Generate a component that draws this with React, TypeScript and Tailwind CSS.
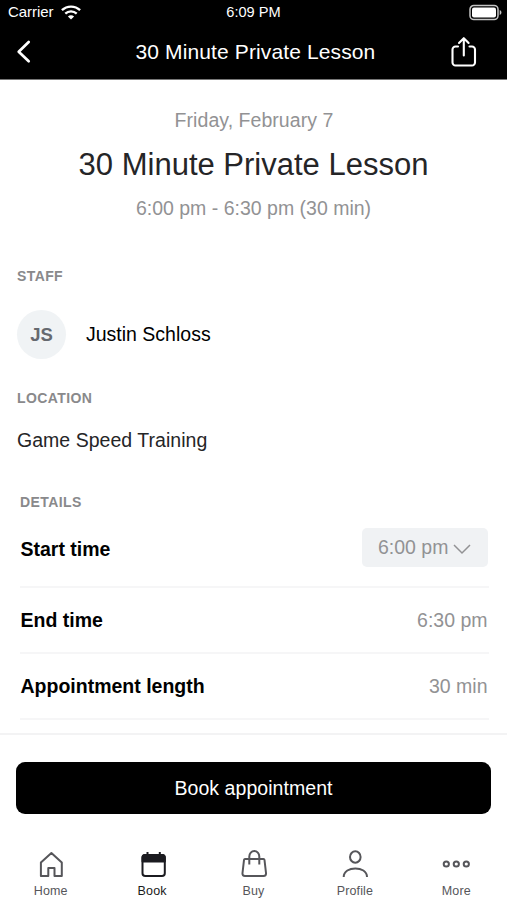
import type { ReactNode } from "react";

function StatusBar() {
  return (
    <div className="grid h-6 grid-cols-3 items-center pr-[5px] pl-2 text-[15px] leading-6">
      <div className="flex items-center gap-[7px]">
        <span className="text-[15px] tracking-[-0.05px]">Carrier</span>
        <svg width="20" height="15" viewBox="0 0 20 15" fill="none" stroke="white" strokeWidth="2.3">
          <path d="M.9 5.2C6 .3 14 .3 19.1 5.2" />
          <path d="M4.3 8.7c3.2-3 8.2-3 11.4 0" />
          <path d="M10 14.4 6.9 11.5c1.8-1.6 4.4-1.6 6.2 0z" fill="white" stroke="none" />
        </svg>
      </div>
      <span className="-ml-[3px] text-center text-[14.6px]">6:09 PM</span>
      <svg className="justify-self-end" width="33" height="17" viewBox="0 0 33 17" fill="none">
        <rect x="1" y="1.5" width="28" height="14" rx="3.8" stroke="#c4c4c4" strokeWidth="1.5" />
        <rect x="3" y="3.5" width="24" height="10" rx="2" fill="white" />
        <path d="M30.7 6v5c2.3-.7 2.3-4.3 0-5z" fill="#c4c4c4" />
      </svg>
    </div>
  );
}

function NavBar() {
  return (
    <div className="grid h-[55px] grid-cols-[62px_1fr_58px] items-center">
      <svg className="ml-4" width="16" height="24" viewBox="0 0 16 24" fill="none" stroke="white" strokeWidth="2.7" strokeLinecap="round" strokeLinejoin="round">
        <path d="M12.7 2 2.7 11.7l10 9.6" />
      </svg>
      <h1 className="mt-px text-center text-[21px] tracking-[0.12px] whitespace-nowrap">30 Minute Private Lesson</h1>
      <svg className="ml-px" width="28" height="32" viewBox="0 0 28 32" fill="none" stroke="white" strokeWidth="2.1" strokeLinecap="round" strokeLinejoin="round">
        <path d="M8 10.5H5.500a3 3 0 0 0-3 3V26.500a3 3 0 0 0 3 3h16.500a3 3 0 0 0 3-3V13.500a3 3 0 0 0-3-3H19.500M13.800 19.500V2.500M9 7l4.800-4.800L18.600 7" />
      </svg>
    </div>
  );
}

function SectionLabel({ children }: { children: ReactNode }) {
  return <h3 className="text-[14px] leading-5 font-bold tracking-[0.4px] text-[#89898b]">{children}</h3>;
}

function Row({ label, className, children }: { label: string; className: string; children: ReactNode }) {
  return (
    <div className={`flex items-center justify-between border-b-2 border-[#f6f6f7] ${className}`}>
      <span className="mt-0.5 ml-[0.5px] text-[19.5px] font-bold text-black">{label}</span>
      {children}
    </div>
  );
}

function Tab({ label, active, children }: { label: string; active?: boolean; children: ReactNode }) {
  return (
    <a className={`flex flex-1 flex-col items-center ${active ? "text-[#1b1b20]" : "text-[#56565a]"}`}>
      <svg width="30" height="30" viewBox="0 0 30 30" fill="none" stroke="currentColor" strokeWidth="2" strokeLinejoin="round">
        {children}
      </svg>
      <span className="mt-1 text-[12.5px] leading-4 tracking-[0.15px]">{label}</span>
    </a>
  );
}

export default function App() {
  return (
    <div className="flex h-[900px] w-[507px] flex-col overflow-hidden bg-white font-['Liberation_Sans',Arial,sans-serif] text-[#252527]">
      <header className="h-20 shrink-0 border-b border-[#777] bg-black text-white">
        <StatusBar />
        <NavBar />
      </header>

      <main className="h-[653px] shrink-0 overflow-hidden">
        <section className="flex flex-col items-center pt-7 text-[#929294]">
          <p className="ml-px text-[19.5px] leading-6 tracking-[0.05px]">Friday, February 7</p>
          <h2 className="mt-[13px] text-[31px] leading-10 text-[#252527]">30 Minute Private Lesson</h2>
          <p className="mt-[11px] text-[19.5px] leading-6">6:00 pm - 6:30 pm (30 min)</p>
        </section>

        <section className="mt-[46px] px-[17px]">
          <SectionLabel>STAFF</SectionLabel>
          <div className="mt-6 flex items-center gap-5">
            <span className="flex size-[49px] items-center justify-center rounded-full bg-[#f0f3f5] text-[18.5px] font-bold text-[#66696f]">JS</span>
            <span className="text-[19.5px] text-black">Justin Schloss</span>
          </div>
        </section>

        <section className="mt-[29px] px-[17px]">
          <SectionLabel>LOCATION</SectionLabel>
          <p className="mt-5 text-[19.5px] leading-6 tracking-[0.03px]">Game Speed Training</p>
        </section>

        <section className="mt-10 pr-[18px] pl-5">
          <SectionLabel>DETAILS</SectionLabel>
          <Row label="Start time" className="h-[76px]">
            <button className="-mt-[3px] mr-px flex h-[39px] w-[126px] items-center gap-[5px] rounded-[5px] bg-[#f0f2f4] pt-px pl-4 text-[19.5px] text-[#929294]">
              6:00 pm
              <svg className="mt-0.5" width="18" height="12" viewBox="0 0 18 12" fill="none" stroke="currentColor" strokeWidth="1.5">
                <path d="m1 2 8 8 8-8" />
              </svg>
            </button>
          </Row>
          <Row label="End time" className="h-[66px]">
            <span className="mt-0.5 mr-[1.5px] text-[19.5px] text-[#929294]">6:30 pm</span>
          </Row>
          <Row label="Appointment length" className="h-[66px]">
            <span className="mt-0.5 mr-[1.5px] text-[19.5px] text-[#929294]">30 min</span>
          </Row>
        </section>
      </main>

      <footer className="flex-1 border-t-2 border-[#f3f3f4] pt-[27px]">
        <button className="mx-4 flex h-[52px] w-[475px] items-center justify-center rounded-[9px] bg-black pt-px text-[19.5px] tracking-[0.05px] text-white">
          Book appointment
        </button>
        <nav className="mt-[35px] flex">
          <Tab label="Home">
            <path d="M4.900 13.500 15.400 4l10.400 9.500V27H18.500v-8h-6.200v8H4.900z" />
          </Tab>
          <Tab label="Book" active>
            <rect x="5.500" y="6" width="22.300" height="21" rx="2.800" />
            <path d="M5.500 12.500V8.500Q5.500 6 8 6h17.300q2.500 0 2.500 2.500v4zM10.500 3v3M22.800 3v3" fill="currentColor" />
          </Tab>
          <Tab label="Buy">
            <path d="M6 10h18.500q.8 0 1 1l1.500 13q.3 3-2.500 3H6q-2.800 0-2.500-3L5 11q.2-1 1-1zM10.300 15.500V7.500a5 5.500 0 0 1 10 0v8" />
          </Tab>
          <Tab label="Profile">
            <ellipse cx="15.300" cy="8" rx="5.300" ry="5.700" />
            <path d="M3.700 28C3.700 16.500 27 16.500 27 28" />
          </Tab>
          <Tab label="More">
            <circle cx="5.300" cy="15" r="2.600" />
            <circle cx="15.300" cy="15" r="2.600" />
            <circle cx="25.300" cy="15" r="2.600" />
          </Tab>
        </nav>
      </footer>
    </div>
  );
}
